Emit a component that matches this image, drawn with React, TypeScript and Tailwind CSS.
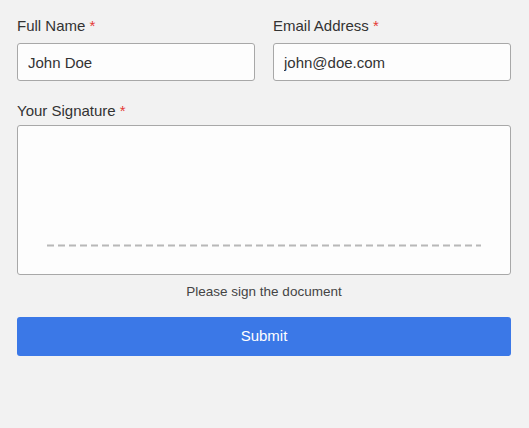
import React from "react";

export default function App() {
  return (
    <div
      className="min-h-[428px] w-full bg-[#f2f2f2] pl-[17px] pr-[18px] pt-[17px] text-[#333333]"
      style={{ fontFamily: '"Liberation Sans", Arial, sans-serif' }}
    >
      <div className="flex gap-[18px]">
        <div className="flex flex-1 flex-col">
          <label className="text-[15px] leading-[18px]">
            Full Name <span className="text-[#e53935]">*</span>
          </label>
          <input
            readOnly
            value="John Doe"
            className="mt-[8px] h-[38px] w-full rounded-[3px] border border-[#a8a8a8] bg-[#fdfdfd] px-[10px] text-[15px] text-[#333333] outline-none"
          />
        </div>
        <div className="flex flex-1 flex-col">
          <label className="text-[15px] leading-[18px]">
            Email Address <span className="text-[#e53935]">*</span>
          </label>
          <input
            readOnly
            value="john@doe.com"
            className="mt-[8px] h-[38px] w-full rounded-[3px] border border-[#a8a8a8] bg-[#fdfdfd] px-[10px] text-[15px] text-[#333333] outline-none"
          />
        </div>
      </div>

      <div className="mt-[21px] flex flex-col">
        <label className="text-[15px] leading-[18px]">
          Your Signature <span className="text-[#e53935]">*</span>
        </label>
        <div className="mt-[5px] flex h-[150px] w-full flex-col rounded-[3px] border border-[#a8a8a8] bg-[#fdfdfd] px-[29px] pt-[118px]">
          <svg width="100%" height="3" className="block">
            <line
              x1="0"
              y1="1.5"
              x2="100%"
              y2="1.5"
              stroke="#b8b8b8"
              strokeWidth="2"
              strokeDasharray="7 4"
            />
          </svg>
        </div>
        <div className="mt-[9px] text-center text-[13.5px] leading-[16px] text-[#444444]">
          Please sign the document
        </div>
      </div>

      <button className="mt-[17px] h-[39px] w-full rounded-[3px] bg-[#3b78e7] text-[15px] text-white">
        Submit
      </button>
    </div>
  );
}
